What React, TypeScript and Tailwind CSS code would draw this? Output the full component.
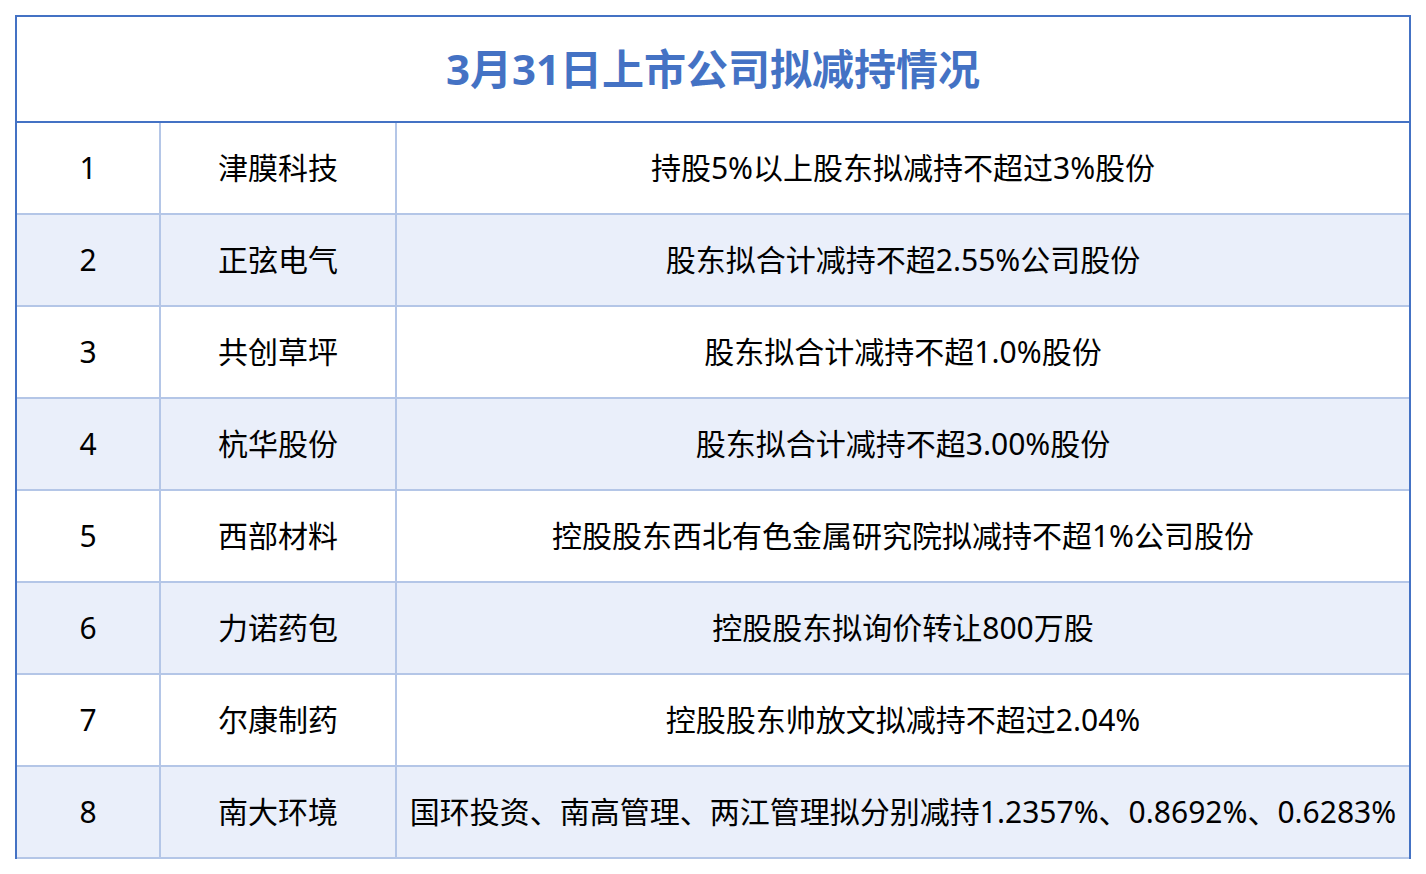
const rows: [string, string, string][] = [
  ['1', '津膜科技', '持股5%以上股东拟减持不超过3%股份'],
  ['2', '正弦电气', '股东拟合计减持不超2.55%公司股份'],
  ['3', '共创草坪', '股东拟合计减持不超1.0%股份'],
  ['4', '杭华股份', '股东拟合计减持不超3.00%股份'],
  ['5', '西部材料', '控股股东西北有色金属研究院拟减持不超1%公司股份'],
  ['6', '力诺药包', '控股股东拟询价转让800万股'],
  ['7', '尔康制药', '控股股东帅放文拟减持不超过2.04%'],
  ['8', '南大环境', '国环投资、南高管理、两江管理拟分别减持1.2357%、0.8692%、0.6283%'],
]

export default function App() {
  return (
    <div
      className="min-h-screen bg-white pl-[15px] pt-[15px]"
      style={{ fontFamily: '"Noto Sans", "Noto Sans CJK SC", sans-serif' }}
    >
      <div className="w-[1396px] border-x-2 border-t-2 border-[#4472C4]">
        <div className="flex h-[106px] items-center justify-center border-b-2 border-[#4472C4]">
          <h1 className="text-[42px] font-bold leading-none text-[#4472C4]">3月31日上市公司拟减持情况</h1>
        </div>
        {rows.map(([no, name, desc], i) => (
          <div
            key={no}
            className={`flex h-[92px] border-b-2 border-[#B4C6E7] text-[30px] leading-none text-black ${
              i % 2 === 1 ? 'bg-[#EAEFFA]' : 'bg-white'
            }`}
          >
            <div className="flex w-[144px] items-center justify-center border-r-2 border-[#B4C6E7]">{no}</div>
            <div className="flex w-[236px] items-center justify-center border-r-2 border-[#B4C6E7]">{name}</div>
            <div className="flex flex-1 items-center justify-center whitespace-nowrap">{desc}</div>
          </div>
        ))}
      </div>
    </div>
  )
}
